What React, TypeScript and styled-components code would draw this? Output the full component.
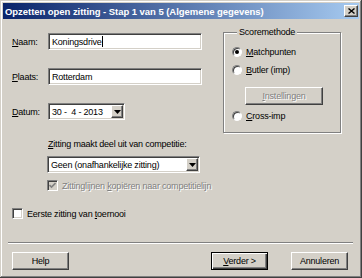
import React from "react";
import styled, { createGlobalStyle, css } from "styled-components";

const GlobalStyle = createGlobalStyle`
  html, body {
    margin: 0;
    padding: 0;
    background: #d4d0c8;
  }
  body {
    font-family: "Liberation Sans", Arial, sans-serif;
    font-size: 9px;
    letter-spacing: -0.2px;
    color: #000;
  }
`;

const raised = css`
  border: 1px solid;
  border-color: #fff #404040 #404040 #fff;
  box-shadow: inset -1px -1px #808080, inset 1px 1px #d4d0c8;
`;

const sunken = css`
  border: 1px solid;
  border-color: #808080 #fff #fff #808080;
  box-shadow: inset 1px 1px #404040, inset -1px -1px #d4d0c8;
`;

const StyledWindow = styled("div")`
  width: 362px;
  height: 278px;
  box-sizing: border-box;
  padding: 3px;
  background: #d4d0c8;
  display: flex;
  flex-direction: column;
  box-shadow: inset -1px -1px #404040, inset 1px 1px #d4d0c8,
    inset -2px -2px #808080, inset 2px 2px #fff;
`;

const StyledTitleBar = styled("div")`
  height: 16px;
  flex: none;
  display: flex;
  align-items: center;
  justify-content: space-between;
  padding: 0 1px 0 2px;
  background: linear-gradient(to right, #0a246a, #a6caf0);
  color: #fff;
  font-weight: 700;
  font-size: 9.5px;
  letter-spacing: -0.05px;
  white-space: nowrap;
`;

const StyledCloseButton = styled("div")`
  ${raised};
  width: 12px;
  height: 10px;
  background: #d4d0c8;
  display: flex;
  align-items: center;
  justify-content: center;
`;

const StyledContent = styled("div")`
  flex: 1;
  display: flex;
  flex-direction: column;
  padding: 14px 11px 0 9px;
`;

const StyledTopRow = styled("div")`
  display: flex;
  align-items: flex-start;
`;

const StyledFields = styled("div")`
  width: 190px;
  display: flex;
  flex-direction: column;
  gap: 18px;
`;

const StyledFieldRow = styled("div")`
  display: flex;
  align-items: center;
  height: 17px;
`;

const StyledLabel = styled("span")`
  width: 36px;
  flex: none;
`;

const StyledBox = styled("div")<{ $width?: number }>`
  ${sunken};
  box-sizing: border-box;
  height: 17px;
  background: #fff;
  display: flex;
  align-items: center;
  padding: 0 1px 0 3px;
  white-space: pre;
  ${(p) => (p.$width ? `width: ${p.$width}px; flex: none;` : "flex: 1;")}
`;

const StyledCaret = styled("span")`
  width: 1px;
  height: 11px;
  background: #000;
`;

const StyledBoxText = styled("span")`
  flex: 1;
`;

const StyledDropButton = styled("div")`
  ${raised};
  box-sizing: border-box;
  width: 12px;
  height: 13px;
  background: #d4d0c8;
  display: flex;
  align-items: center;
  justify-content: center;
`;

const StyledGroup = styled("fieldset")`
  margin: -6px 0 0 21px;
  width: 118px;
  height: 106px;
  box-sizing: border-box;
  padding: 8px 8px 0 8px;
  border: 1px solid #808080;
  box-shadow: 1px 1px #fff, inset 1px 1px #fff;
  min-width: 0;
`;

const StyledLegend = styled("legend")`
  margin-left: 5px;
  padding: 0 2px;
  line-height: 11px;
  background: #d4d0c8;
`;

const StyledOptions = styled("div")`
  display: flex;
  flex-direction: column;
`;

const StyledRadioRow = styled("div")<{ $gap?: number }>`
  display: flex;
  align-items: center;
  gap: 4px;
  height: 12px;
  margin-top: ${(p) => p.$gap ?? 0}px;
`;

const StyledRadio = styled("span")<{ $checked?: boolean }>`
  box-sizing: border-box;
  width: 10px;
  height: 10px;
  border-radius: 50%;
  background: #fff;
  border: 1px solid;
  border-color: #808080 #fff #fff #808080;
  box-shadow: inset 1px 1px #404040;
  display: flex;
  align-items: center;
  justify-content: center;
  &::after {
    content: "";
    width: 4px;
    height: 4px;
    border-radius: 50%;
    background: ${(p) => (p.$checked ? "#000" : "transparent")};
  }
`;

const StyledButton = styled("div")<{ $default?: boolean; $disabled?: boolean; $width?: number }>`
  box-sizing: border-box;
  width: ${(p) => p.$width ?? 57}px;
  height: 18px;
  background: #d4d0c8;
  display: flex;
  align-items: center;
  justify-content: center;
  ${(p) =>
    p.$default
      ? css`
          border: 1px solid #000;
          box-shadow: inset 1px 1px #fff, inset -1px -1px #404040,
            inset -2px -2px #808080;
        `
      : raised};
  ${(p) =>
    p.$disabled &&
    css`
      color: #808080;
      text-shadow: 1px 1px #fff;
    `}
`;

const StyledSection = styled("div")`
  margin-left: 35px;
  display: flex;
  flex-direction: column;
`;

const StyledSectionLabel = styled("div")`
  margin: 6px 0 0 1px;
  line-height: 11px;
`;

const StyledCheckRow = styled("div")<{ $gap: number; $disabled?: boolean }>`
  display: flex;
  align-items: center;
  gap: 4px;
  height: 11px;
  margin-top: ${(p) => p.$gap}px;
  ${(p) =>
    p.$disabled &&
    css`
      color: #808080;
      text-shadow: 1px 1px #fff;
    `}
`;

const StyledCheckbox = styled("span")<{ $disabled?: boolean }>`
  ${sunken};
  box-sizing: border-box;
  width: 11px;
  height: 11px;
  flex: none;
  background: ${(p) => (p.$disabled ? "#d4d0c8" : "#fff")};
  display: flex;
  align-items: center;
  justify-content: center;
`;

const StyledSeparator = styled("div")`
  margin: 23px -5px 0 -4px;
  border-top: 1px solid #808080;
  border-bottom: 1px solid #fff;
  height: 0;
`;

const StyledButtonRow = styled("div")`
  margin-top: 8px;
  display: flex;
  align-items: center;
  gap: 23px;
`;

const StyledSpacer = styled("div")`
  flex: 1;
`;

const StyledKey = styled("span")`
  text-decoration: underline;
`;

const Arrow: React.FC = () => (
  <svg width="7" height="4" viewBox="0 0 7 4">
    <polygon points="0,0 7,0 3.5,4" fill="#000" />
  </svg>
);

const Check: React.FC<{ color: string }> = ({ color }) => (
  <svg width="7" height="7" viewBox="0 0 7 7">
    <polyline points="0.5,3 2.5,5 6.5,1" fill="none" stroke={color} strokeWidth="1.6" />
  </svg>
);

const App: React.FC = () => {
  return (
    <StyledWindow>
      <GlobalStyle />
      <StyledTitleBar>
        <span>Opzetten open zitting - Stap 1 van 5 (Algemene gegevens)</span>
        <StyledCloseButton>
          <svg width="7" height="6" viewBox="0 0 7 6">
            <path d="M0.5 0.5 L6.5 5.5 M6.5 0.5 L0.5 5.5" stroke="#000" strokeWidth="1.4" />
          </svg>
        </StyledCloseButton>
      </StyledTitleBar>
      <StyledContent>
        <StyledTopRow>
          <StyledFields>
            <StyledFieldRow>
              <StyledLabel>
                <StyledKey>N</StyledKey>aam:
              </StyledLabel>
              <StyledBox>
                Koningsdrive
                <StyledCaret />
              </StyledBox>
            </StyledFieldRow>
            <StyledFieldRow>
              <StyledLabel>
                <StyledKey>P</StyledKey>laats:
              </StyledLabel>
              <StyledBox>Rotterdam</StyledBox>
            </StyledFieldRow>
            <StyledFieldRow>
              <StyledLabel>
                <StyledKey>D</StyledKey>atum:
              </StyledLabel>
              <StyledBox $width={77}>
                <StyledBoxText>{"30 -  4 - 2013"}</StyledBoxText>
                <StyledDropButton>
                  <Arrow />
                </StyledDropButton>
              </StyledBox>
            </StyledFieldRow>
          </StyledFields>
          <StyledGroup>
            <StyledLegend>Scoremethode</StyledLegend>
            <StyledOptions>
              <StyledRadioRow>
                <StyledRadio $checked />
                <span>
                  <StyledKey>M</StyledKey>atchpunten
                </span>
              </StyledRadioRow>
              <StyledRadioRow $gap={6}>
                <StyledRadio />
                <span>
                  <StyledKey>B</StyledKey>utler (imp)
                </span>
              </StyledRadioRow>
              <StyledButton
                $disabled
                $width={78}
                style={{ marginTop: 11, marginLeft: 13 }}
              >
                <span>
                  <StyledKey>I</StyledKey>nstellingen
                </span>
              </StyledButton>
              <StyledRadioRow $gap={5}>
                <StyledRadio />
                <span>
                  <StyledKey>C</StyledKey>ross-imp
                </span>
              </StyledRadioRow>
            </StyledOptions>
          </StyledGroup>
        </StyledTopRow>
        <StyledSection>
          <StyledSectionLabel>
            <StyledKey>Z</StyledKey>itting maakt deel uit van competitie:
          </StyledSectionLabel>
          <StyledBox $width={153} style={{ marginTop: 6 }}>
            <StyledBoxText>Geen (onafhankelijke zitting)</StyledBoxText>
            <StyledDropButton>
              <Arrow />
            </StyledDropButton>
          </StyledBox>
          <StyledCheckRow $gap={7} $disabled>
            <StyledCheckbox $disabled>
              <Check color="#808080" />
            </StyledCheckbox>
            <span>
              Zittinglijnen <StyledKey>k</StyledKey>opiëren naar competitielijn
            </span>
          </StyledCheckRow>
        </StyledSection>
        <StyledCheckRow $gap={17}>
          <StyledCheckbox />
          <span>
            Eerste zitting van <StyledKey>t</StyledKey>oernooi
          </span>
        </StyledCheckRow>
        <StyledSeparator />
        <StyledButtonRow>
          <StyledButton>Help</StyledButton>
          <StyledSpacer />
          <StyledButton $default>
            <span>
              <StyledKey>V</StyledKey>erder &gt;
            </span>
          </StyledButton>
          <StyledButton>Annuleren</StyledButton>
        </StyledButtonRow>
      </StyledContent>
    </StyledWindow>
  );
};

export default App;
